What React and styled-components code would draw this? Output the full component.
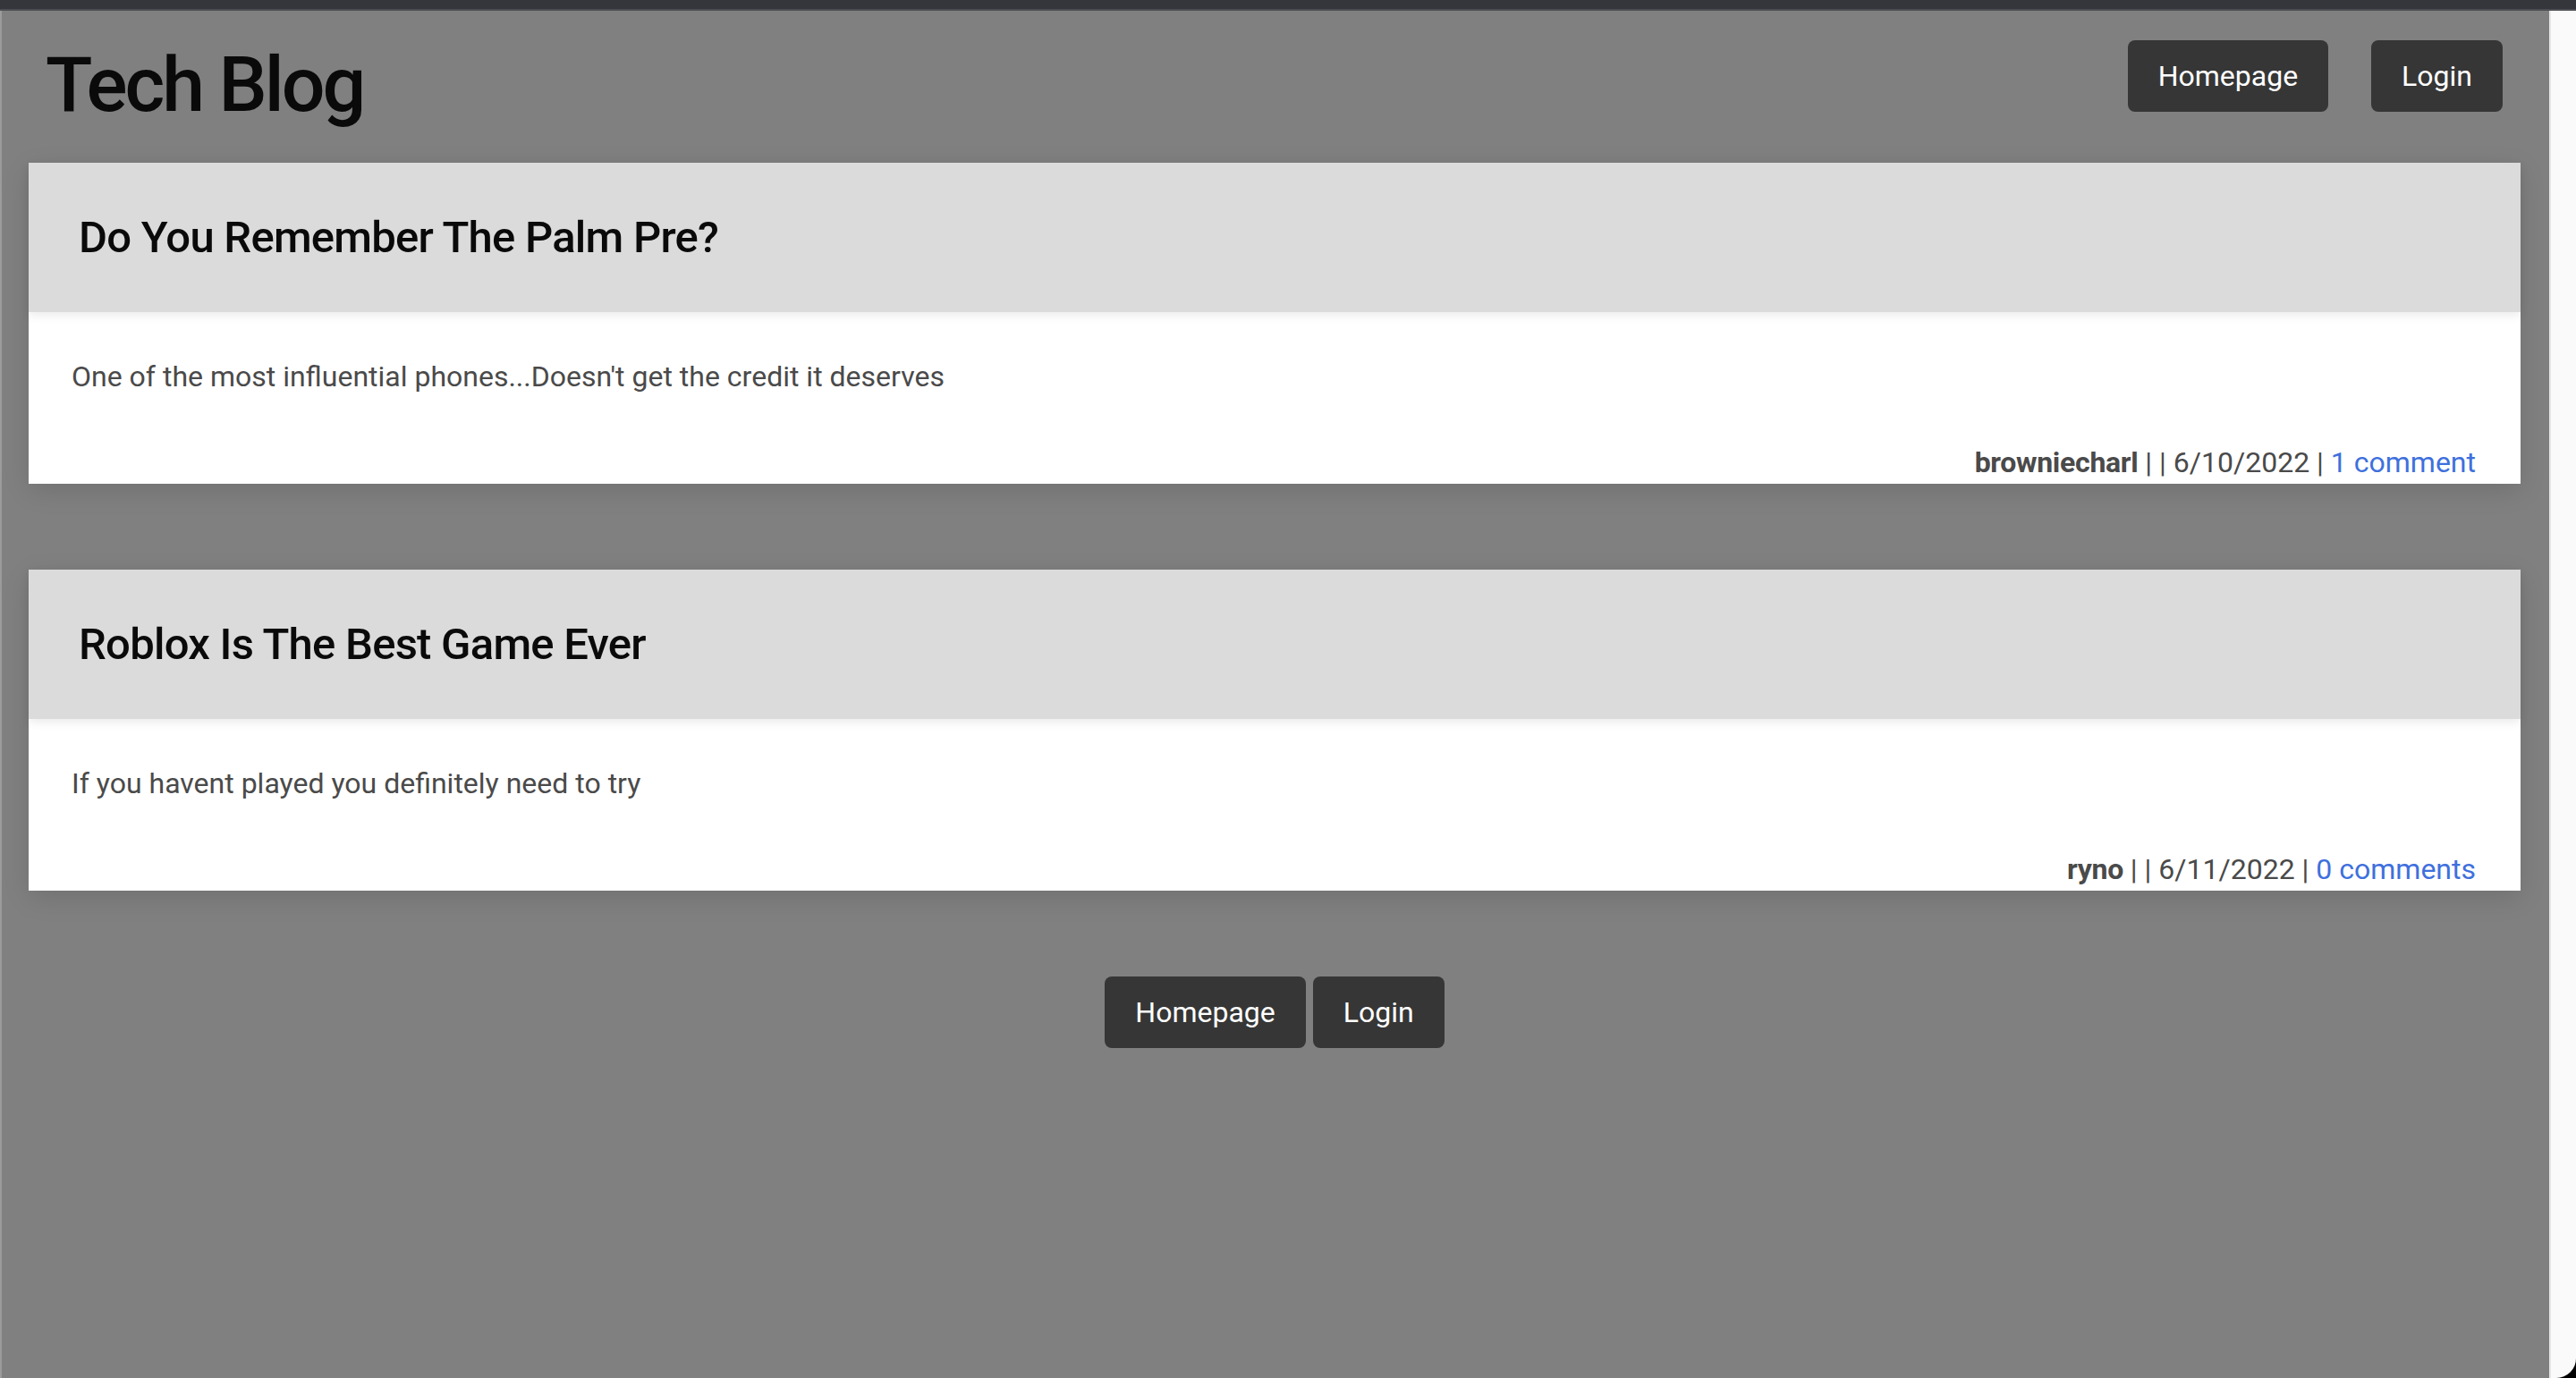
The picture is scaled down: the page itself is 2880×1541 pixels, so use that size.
import React from 'react';
import styled, { createGlobalStyle } from 'styled-components';

const GlobalStyle = createGlobalStyle`
  html, body {
    margin: 0;
    padding: 0;
  }
  body {
    font-family: Roboto, "Noto Sans", "Liberation Sans", sans-serif;
    background: #000;
  }
  * {
    box-sizing: border-box;
  }
`;

const Window = styled.div`
  display: flex;
  flex-direction: column;
  height: 1541px;
  background: #000;
  overflow: hidden;
`;

const TitleBar = styled.div`
  flex-shrink: 0;
  height: 12px;
  background: #35363b;
  border-bottom: 2px solid #4c4d52;
`;

const Viewport = styled.div`
  display: flex;
  flex: 1;
  min-height: 0;
`;

const Page = styled.main`
  flex: 1;
  background: #808080;
  box-shadow: inset 2px 0 0 #9b9b9b;
  padding: 33px 32px 0;
`;

const ScrollTrack = styled.div`
  width: 30px;
  background: #fafafa;
  border-left: 2px solid #e6e6e6;
  border-bottom-right-radius: 22px;
`;

const Header = styled.header`
  display: flex;
  justify-content: space-between;
  align-items: flex-start;
  padding: 0 20px 0 19px;
  margin-bottom: 36px;
`;

const SiteTitle = styled.h1`
  margin: 0;
  font-size: 86px;
  font-weight: 500;
  letter-spacing: -3px;
  line-height: 1.171;
  color: #0a0a0a;
`;

const Nav = styled.nav`
  display: flex;
  gap: ${(p) => p.$gap}px;
  justify-content: ${(p) => (p.$center ? 'center' : 'flex-end')};
`;

const Button = styled.a`
  display: inline-flex;
  align-items: center;
  height: 80px;
  padding: 0 34px;
  border-radius: 8px;
  background: #363636;
  color: #fff;
  font-size: 32px;
  text-decoration: none;
  cursor: pointer;
`;

const Card = styled.article`
  background: #fff;
  box-shadow: 0 8px 28px rgba(0, 0, 0, 0.12);
  margin-bottom: 96px;
`;

const CardHeader = styled.div`
  position: relative;
  z-index: 1;
  display: flex;
  align-items: center;
  height: 167px;
  padding: 0 56px;
  background: #dbdbdb;
  box-shadow: 0 4px 10px rgba(0, 0, 0, 0.08);
`;

const CardTitle = styled.h2`
  margin: 0;
  font-size: 49px;
  font-weight: 500;
  letter-spacing: -0.75px;
  color: #0a0a0a;
`;

const CardBody = styled.div`
  padding: 54px 50px 4px 48px;
  font-size: 32px;
  line-height: 1.171;
  color: #4a4a4a;
`;

const Excerpt = styled.p`
  margin: 0 0 59px;
`;

const Meta = styled.div`
  text-align: right;
`;

const Author = styled.strong`
  font-weight: 700;
  letter-spacing: -0.3px;
`;

const CommentLink = styled.a`
  color: #3e70dd;
  text-decoration: none;
`;

const posts = [
  {
    id: 1,
    title: 'Do You Remember The Palm Pre?',
    body: "One of the most influential phones...Doesn't get the credit it deserves",
    author: 'browniecharl',
    date: '6/10/2022',
    comments: 1,
  },
  {
    id: 2,
    title: 'Roblox Is The Best Game Ever',
    body: 'If you havent played you definitely need to try',
    author: 'ryno',
    date: '6/11/2022',
    comments: 0,
  },
];

const PostCard = ({ post }) => (
  <Card>
    <CardHeader>
      <CardTitle>{post.title}</CardTitle>
    </CardHeader>
    <CardBody>
      <Excerpt>{post.body}</Excerpt>
      <Meta>
        <Author>{post.author}</Author> | | {post.date} |{' '}
        <CommentLink href="#">
          {post.comments} {post.comments === 1 ? 'comment' : 'comments'}
        </CommentLink>
      </Meta>
    </CardBody>
  </Card>
);

const App = () => (
  <>
    <GlobalStyle />
    <Window>
      <TitleBar />
      <Viewport>
        <Page>
          <Header>
            <SiteTitle>Tech Blog</SiteTitle>
            <Nav $gap={48}>
              <Button href="#">Homepage</Button>
              <Button href="#">Login</Button>
            </Nav>
          </Header>
          {posts.map((post) => (
            <PostCard key={post.id} post={post} />
          ))}
          <Nav $gap={8} $center>
            <Button href="#">Homepage</Button>
            <Button href="#">Login</Button>
          </Nav>
        </Page>
        <ScrollTrack />
      </Viewport>
    </Window>
  </>
);

export default App;
